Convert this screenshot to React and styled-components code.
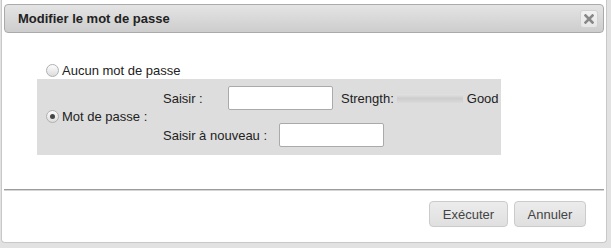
import React from 'react'
import styled, { createGlobalStyle } from 'styled-components'

const GlobalStyle = createGlobalStyle`
  html, body {
    margin: 0;
    padding: 0;
    background: #e2e2e2;
    font-family: "Liberation Sans", Arial, sans-serif;
    font-size: 13px;
    color: #222;
  }
`

const Page = styled.div`
  height: 248px;
  overflow: hidden;
  padding-left: 1px;
`

const Dialog = styled.div`
  box-sizing: border-box;
  width: 606px;
  height: 243px;
  background: #fff;
  border: 1px solid #c8c8c8;
  border-top: none;
  border-radius: 0 0 4px 4px;
  padding: 4px 2px 0;
  display: flex;
  flex-direction: column;
`

const TitleBar = styled.div`
  box-sizing: border-box;
  flex: none;
  height: 29px;
  border: 1px solid #aaa;
  border-radius: 4px;
  background: linear-gradient(#e4e4e4, #cdcdcd);
  display: flex;
  align-items: center;
  justify-content: space-between;
  padding: 0 5px 0 13px;
`

const Title = styled.span`
  font-weight: bold;
  font-size: 13px;
  color: #222;
`

const CloseButton = styled.button`
  box-sizing: border-box;
  width: 18px;
  height: 18px;
  padding: 0;
  border: 1px solid #d2d2d2;
  border-radius: 3px;
  background: linear-gradient(#f2f2f2, #e6e6e6);
  display: flex;
  align-items: center;
  justify-content: center;
`

const Body = styled.div`
  flex: none;
  padding: 29px 0 0 33px;
`

const RadioRow = styled.label`
  display: flex;
  align-items: center;
  height: 16px;
  padding-left: 9px;
  margin-bottom: 1px;
`

const Radio = styled.span`
  box-sizing: border-box;
  width: 13px;
  height: 13px;
  border-radius: 50%;
  border: 1px solid #b0b0b0;
  background: linear-gradient(#fdfdfd, #dcdcdc);
  margin-right: 3px;
  display: flex;
  align-items: center;
  justify-content: center;
  &::after {
    content: '';
    width: 5px;
    height: 5px;
    border-radius: 50%;
    background: ${p => (p.$checked ? '#454545' : 'transparent')};
  }
`

const PasswordBox = styled.div`
  width: 464px;
  box-sizing: border-box;
  background: #dddddd;
  display: flex;
  align-items: center;
  padding: 7px 0 8px;
`

const OptionCell = styled.label`
  display: flex;
  align-items: center;
  width: 117px;
  padding-left: 9px;
`

const Fields = styled.div`
  display: flex;
  flex-direction: column;
  gap: 13px;
`

const FieldRow = styled.div`
  display: flex;
  align-items: center;
  height: 24px;
`

const FieldLabel = styled.span`
  width: ${p => p.$width}px;
`

const TextInput = styled.input`
  box-sizing: border-box;
  width: 105px;
  height: 24px;
  border: 1px solid #aaa;
  border-radius: 2px;
  background: #fff;
  margin: 0;
`

const Strength = styled.span`
  margin-left: 8px;
  display: flex;
  align-items: center;
`

const Meter = styled.span`
  display: inline-block;
  width: 66px;
  height: 9px;
  margin: 0 4px 0 3px;
  background: linear-gradient(#e2e2e2, #cdcdcd 50%, #dadada);
`

const Separator = styled.div`
  flex: none;
  margin: 34px 0 0;
  border-top: 1px solid #9c9c9c;
  border-bottom: 1px solid #d4d4d4;
`

const Footer = styled.div`
  display: flex;
  justify-content: flex-end;
  gap: 6px;
  padding: 10px 18px 0 0;
`

const Button = styled.button`
  box-sizing: border-box;
  height: 26px;
  width: ${p => p.$width}px;
  border: 1px solid #cbcbcb;
  border-radius: 4px;
  background: linear-gradient(#ececec, #e0e0e0);
  color: #444;
  font-family: "Liberation Sans", Arial, sans-serif;
  font-size: 13px;
  padding: 0;
`

const CloseIcon = () => (
  <svg width="10" height="10" viewBox="0 0 10 10">
    <path d="M1.5 1.5 L8.5 8.5 M8.5 1.5 L1.5 8.5" stroke="#888" strokeWidth="2.6" strokeLinecap="square" />
  </svg>
)

export default function App() {
  return (
    <Page>
      <GlobalStyle />
      <Dialog>
        <TitleBar>
          <Title>Modifier le mot de passe</Title>
          <CloseButton>
            <CloseIcon />
          </CloseButton>
        </TitleBar>
        <Body>
          <RadioRow>
            <Radio />
            Aucun mot de passe
          </RadioRow>
          <PasswordBox>
            <OptionCell>
              <Radio $checked />
              Mot de passe :
            </OptionCell>
            <Fields>
              <FieldRow>
                <FieldLabel $width={65}>Saisir :</FieldLabel>
                <TextInput type="password" />
                <Strength>
                  Strength:
                  <Meter />
                  Good
                </Strength>
              </FieldRow>
              <FieldRow>
                <FieldLabel $width={116}>Saisir à nouveau :</FieldLabel>
                <TextInput type="password" />
              </FieldRow>
            </Fields>
          </PasswordBox>
        </Body>
        <Separator />
        <Footer>
          <Button $width={79}>Exécuter</Button>
          <Button $width={72}>Annuler</Button>
        </Footer>
      </Dialog>
    </Page>
  )
}
